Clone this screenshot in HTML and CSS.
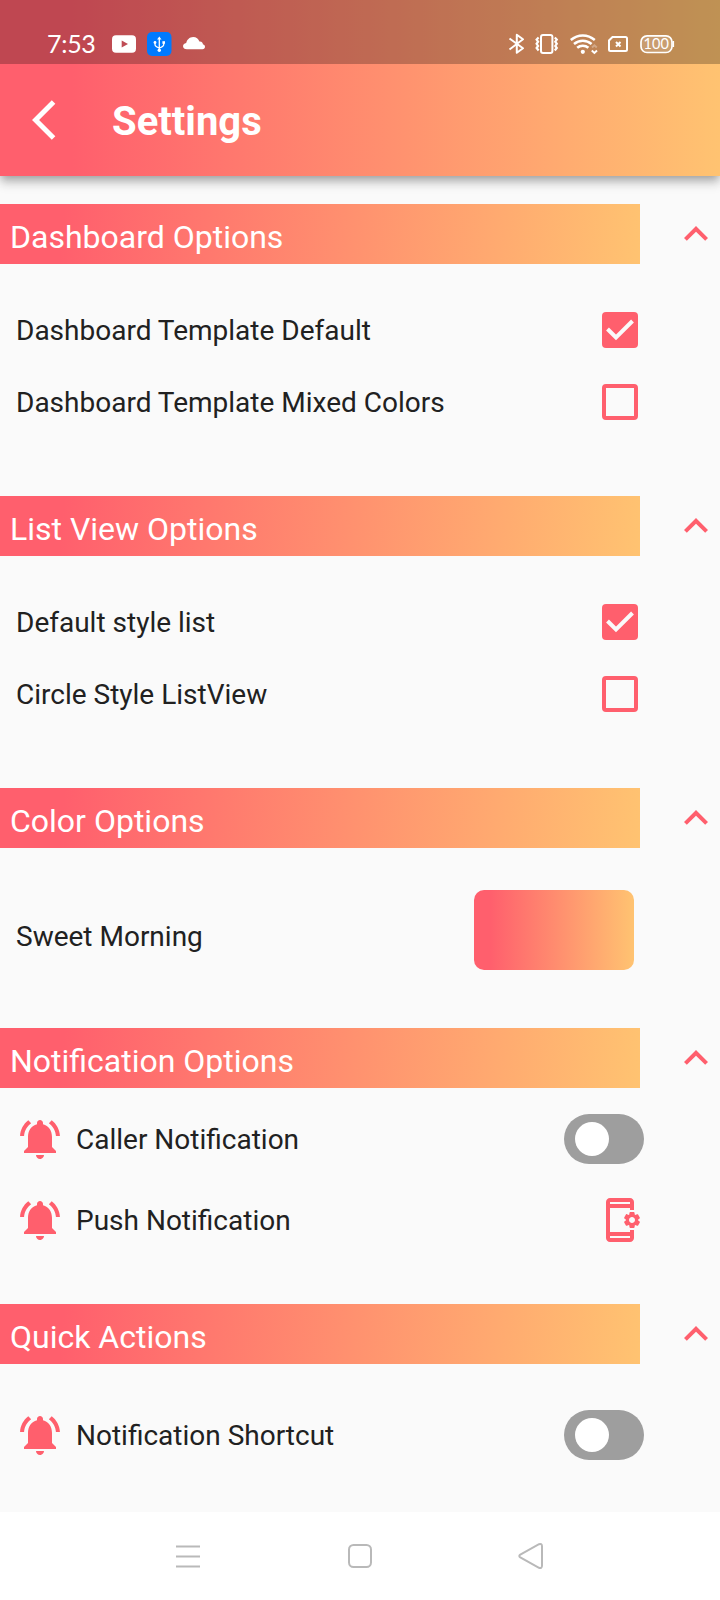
FILE: index.html
```html
<!DOCTYPE html>
<html lang="en">
<head>
<meta charset="utf-8">
<title>Settings</title>
<link rel="stylesheet" href="styles.css">
</head>
<body>
<svg class="defs" width="0" height="0">
  <symbol id="less" viewBox="0 0 24 24"><path d="M12 8l-6 6 1.41 1.41L12 10.83l4.59 4.58L18 14z"/></symbol>
  <symbol id="bell" viewBox="0 0 24 24"><path d="M7.58 4.08L6.15 2.65C3.75 4.48 2.17 7.3 2.03 10.5h2c.15-2.65 1.51-4.97 3.55-6.42zm12.39 6.42h2c-.15-3.2-1.73-6.02-4.12-7.85l-1.42 1.43c2.02 1.45 3.39 3.77 3.54 6.42zM18 11c0-3.07-1.64-5.64-4.5-6.32V4c0-.83-.67-1.5-1.5-1.5s-1.5.67-1.5 1.5v.68C7.63 5.36 6 7.92 6 11v5l-2 2v1h16v-1l-2-2v-5zm-6 11c.14 0 .27-.01.4-.04.65-.14 1.18-.58 1.44-1.18.1-.24.15-.5.15-.78h-4c.01 1.1.9 2 2.01 2z"/></symbol>
  <symbol id="check" viewBox="0 0 36 36"><path d="M5.500 17L14 25.500 30.500 9" fill="none" stroke="#fafafa" stroke-width="4"/></symbol>
</svg>
<header class="top">
  <div class="status">
    <span class="time">7:53</span>
    <svg class="left-icons" width="96" height="26" viewBox="110 31 96 26">
      <rect x="112" y="35.300" width="24" height="17.400" rx="4" fill="#fff"/>
      <path d="M121.700 40.500v7l6.300-3.500z" fill="#bf4b54"/>
      <rect x="147" y="32" width="24.500" height="24" rx="5" fill="#007aff"/>
      <g stroke="#fff" stroke-width="1.300" fill="none"><path d="M159.300 38.500v12M155 43v1.500q0 2 4.300 3.500M163.700 43v1.500q0 2-4.300 3.500"/></g>
      <g fill="#fff"><path d="M159.300 36.500l2.200 3h-4.400z"/><circle cx="155" cy="42.500" r="1.400"/><circle cx="159.300" cy="50.300" r="1.700"/><path d="M162.400 41.200h2.600v2.600h-2.600z"/>
      <path d="M187 49.300c-5 0-5.200-5.800-.8-6.300.6-3 3.200-6 7-6 3 0 5.400 1.800 6.200 4.500 2.600-.2 3.400 1.300 3.500 2.800 3 .7 2.800 5-.4 5z"/></g>
    </svg>
    <svg class="right-icons" width="170" height="26" viewBox="506 31 170 26" fill="none" stroke="#fff" stroke-width="2">
      <path d="M509.500 38.500l13.500 9.800-6.200 4.500v-18l6.200 4.500L509.500 49.500" stroke-linejoin="round"/>
      <rect x="541" y="35" width="11.400" height="18" rx="2"/>
      <path d="M538.600 37.500l-2 2.100 1.500 2.100-1.500 2.100 1.500 2.100-1.500 2.100 2 2.500M554.800 37.500l2 2.100-1.500 2.100 1.500 2.100-1.500 2.100 1.500 2.100-2 2.500" stroke-width="2.200"/>
      <g stroke-width="2.500"><path d="M570.800 40c7.200-6.100 16.800-6.100 24 0M574 44c5.200-4.500 12.400-4.500 17.600 0M577.200 47.800c3.200-2.900 8-2.900 11.200 0"/></g>
      <circle cx="582.800" cy="51.800" r="2.100" fill="#fff" stroke="none"/>
      <path d="M592 47.500l2.400-2.200 2.400 2.200" stroke-opacity=".3"/><path d="M591.800 50.500l2.600 2.400 2.600-2.400"/>
      <path d="M612.500 37h13a1.500 1.500 0 0 1 1.500 1.500v11a1.500 1.500 0 0 1-1.500 1.500h-15a1.500 1.500 0 0 1-1.500-1.500V40.500z"/>
      <path d="M616 42l4.500 4.500M620.500 42l-4.500 4.500"/>
      <rect x="641" y="35.900" width="31" height="16.600" rx="6" fill="#fff" fill-opacity=".16" stroke-width="1.700"/>
      <path d="M673.300 41v6" stroke-width="1.600"/>
      <text x="656.200" y="49" class="charge">100</text>
    </svg>
  </div>
  <div class="appbar">
    <svg class="back" width="48" height="48" viewBox="0 0 24 24" fill="#fff"><path d="M11.670 3.870L9.900 2.100 0 12l9.900 9.900 1.770-1.770L3.540 12z"/></svg>
    <h1>Settings</h1>
  </div>
</header>
<main>
  <section class="checks">
    <div class="head"><h2>Dashboard Options</h2><svg><use href="#less"/></svg></div>
    <div class="row"><span>Dashboard Template Default</span><i class="box on"><svg><use href="#check"/></svg></i></div>
    <div class="row"><span>Dashboard Template Mixed Colors</span><i class="box"></i></div>
  </section>
  <section class="checks">
    <div class="head"><h2>List View Options</h2><svg><use href="#less"/></svg></div>
    <div class="row"><span>Default style list</span><i class="box on"><svg><use href="#check"/></svg></i></div>
    <div class="row"><span>Circle Style ListView</span><i class="box"></i></div>
  </section>
  <section class="colors">
    <div class="head"><h2>Color Options</h2><svg><use href="#less"/></svg></div>
    <div class="row"><span>Sweet Morning</span><i class="swatch"></i></div>
  </section>
  <section class="notices">
    <div class="head"><h2>Notification Options</h2><svg><use href="#less"/></svg></div>
    <div class="row alert"><svg class="bell"><use href="#bell"/></svg><span>Caller Notification</span><i class="switch"></i></div>
    <div class="row alert"><svg class="bell"><use href="#bell"/></svg><span>Push Notification</span>
      <svg class="phone" viewBox="0 0 24 24"><path fill-rule="evenodd" d="M21.810,12.740l-0.820-0.630c0-0.090,0-0.130,0-0.220l0.800-0.630c0.160-0.120,0.200-0.340,0.100-0.510l-0.850-1.480c-0.070-0.130-0.210-0.200-0.350-0.200c-0.050,0-0.100,0.010-0.150,0.030l-0.950,0.380c-0.080-0.050-0.110-0.070-0.190-0.110l-0.150-1.010c-0.030-0.210-0.200-0.360-0.400-0.360h-1.710c-0.200,0-0.370,0.150-0.400,0.340l-0.140,1.010c-0.030,0.020-0.070,0.030-0.100,0.050l-0.090,0.060l-0.950-0.380c-0.050-0.020-0.100-0.030-0.150-0.030c-0.140,0-0.270,0.070-0.350,0.200l-0.850,1.480c-0.100,0.170-0.060,0.390,0.100,0.510l0.800,0.630c0,0.090,0,0.130,0,0.230l-0.800,0.630c-0.160,0.120-0.200,0.340-0.100,0.510l0.850,1.480c0.070,0.130,0.210,0.200,0.350,0.200c0.050,0,0.100-0.010,0.150-0.030l0.950-0.370c0.080,0.050,0.120,0.070,0.200,0.110l0.150,1.010c0.030,0.200,0.200,0.340,0.400,0.340h1.710c0.200,0,0.370-0.150,0.400-0.340l0.150-1.010c0.030-0.020,0.070-0.030,0.100-0.050l0.090-0.060l0.950,0.380c0.050,0.020,0.100,0.030,0.150,0.030c0.140,0,0.270-0.070,0.350-0.200l0.850-1.480C22.010,13.080,21.970,12.860,21.810,12.740zM18,13.500c-0.830,0-1.500-0.670-1.500-1.500s0.670-1.500,1.500-1.500s1.500,0.670,1.500,1.500S18.830,13.500,18,13.500zM17,17h2v4c0,1.100-0.900,2-2,2H7c-1.100,0-2-0.900-2-2V3c0-1.100,0.900-2,2-2h10c1.100,0,2,0.900,2,2v4h-2V6H7v12h10V17zM7,20v1h10v-1H7zM7,3v1h10V3H7z"/></svg>
    </div>
  </section>
  <section class="quick">
    <div class="head"><h2>Quick Actions</h2><svg><use href="#less"/></svg></div>
    <div class="row alert"><svg class="bell"><use href="#bell"/></svg><span>Notification Shortcut</span><i class="switch"></i></div>
  </section>
</main>
<nav>
  <svg width="28" height="28" viewBox="0 0 28 28"><path d="M2 4.500h24M2 14.500h24M2 24.500h24"/></svg>
  <svg width="28" height="28" viewBox="0 0 28 28"><rect x="3" y="3" width="22" height="22" rx="4.500"/></svg>
  <svg width="28" height="28" viewBox="0 0 28 28"><path d="M2.300 12.700L21 2.200Q23.700 1.300 24 4V24Q23.700 26.700 21 25.800L2.300 15.300Q.3 14 2.300 12.700z"/></svg>
</nav>
</body>
</html>
```
FILE: styles.css
```css
* { box-sizing: border-box; }
body {
  margin: 0;
  width: 720px;
  height: 1600px;
  display: flex;
  flex-direction: column;
  overflow: hidden;
  background: #fafafa;
  color: #212121;
  font-family: Roboto, "Liberation Sans", sans-serif;
}
svg { display: block; flex: none; }
.defs { position: absolute; }
h1, h2 { margin: 0; color: #fff; }

.top {
  height: 176px;
  flex: none;
  background: linear-gradient(90deg, #ff5f6d 10%, #ffc371);
  box-shadow: 0 4px 8px -2px rgba(0,0,0,.2), 0 8px 10px rgba(0,0,0,.14), 0 2px 12px rgba(0,0,0,.12);
}
.status {
  height: 64px;
  padding: 31px 44px 0 46px;
  display: flex;
  background: rgba(0,0,0,.25);
}
.time {
  width: 64px;
  padding-left: 1px;
  color: #fff;
  font: 25px/24px Lato, sans-serif;
  letter-spacing: -.3px;
}
.right-icons { margin-left: auto; }
.charge {
  font: 14.5px Lato, sans-serif;
  fill: #fff;
  stroke: none;
  text-anchor: middle;
}
.appbar {
  height: 112px;
  padding-left: 32px;
  display: flex;
  align-items: center;
  gap: 32px;
}
h1 { padding-top: 3px; font-size: 40px; font-weight: 700; line-height: 48px; }

main { flex: none; height: 1336px; padding-top: 28px; }
.checks { height: 292px; }
.colors { height: 240px; }
.notices { height: 276px; }
.head {
  display: flex;
  align-items: center;
  justify-content: space-between;
}
.head h2 {
  width: 640px;
  height: 60px;
  padding: 14px 10px 0;
  background: linear-gradient(95.36deg, #ff5f6d 10%, #ffc371);
  font-size: 32px;
  font-weight: 400;
  line-height: 38px;
}
.head svg { width: 48px; height: 48px; fill: #ff5f6d; }
.row {
  display: flex;
  align-items: center;
  justify-content: space-between;
  height: 72px;
  padding: 0 82px 0 16px;
  font-size: 28px;
  line-height: 34px;
}
.row span { padding-top: 2px; }
.checks .head { margin-bottom: 30px; }
.box {
  width: 36px;
  height: 36px;
  border: 4px solid #ff5f6d;
  border-radius: 4px;
}
.box.on { border: 0; background: #ff5f6d; }
.box svg { width: 36px; height: 36px; }
.colors .row { height: 164px; padding-right: 86px; }
.colors .row span { padding-top: 14px; }
.swatch {
  width: 160px;
  height: 80px;
  border-radius: 10px;
  background: linear-gradient(90deg, #ff5f6d 10%, #ffc371);
}
.alert { height: 81px; padding-right: 76px; }
.alert span { margin: 0 auto 0 12px; }
.notices .head { margin-bottom: 10px; }
.quick .head { margin-bottom: 30px; }
.bell, .phone { width: 48px; height: 48px; fill: #ff5f6d; }
.switch {
  width: 80px;
  height: 50px;
  padding: 8px 11px;
  border-radius: 25px;
  background: #9e9e9e;
}
.switch::before {
  content: "";
  display: block;
  width: 34px;
  height: 34px;
  border-radius: 50%;
  background: #fff;
}
nav {
  height: 88px;
  padding: 30px 174px 0;
  display: flex;
  justify-content: space-between;
  background: #fff;
}
nav svg { fill: none; stroke: #b9b9b9; stroke-width: 2; }
```
